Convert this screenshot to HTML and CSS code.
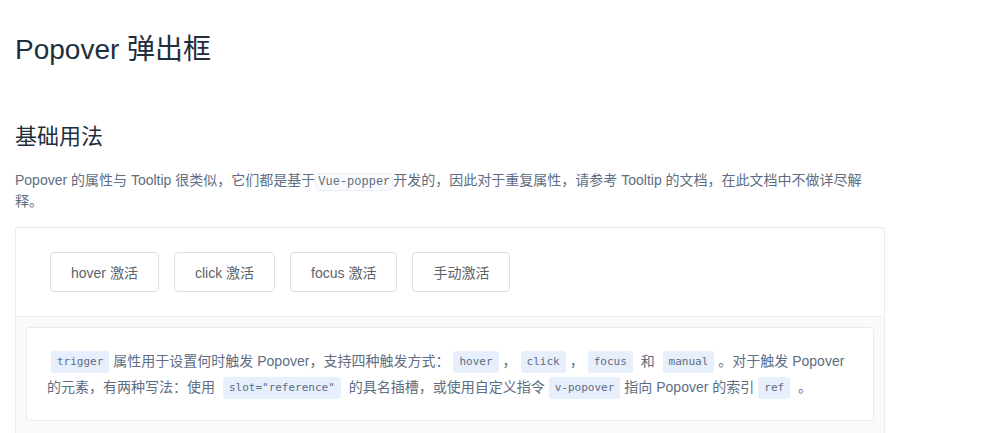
FILE: index.html
```html
<!DOCTYPE html>
<html lang="zh-CN">
<head>
    <meta charset="UTF-8">
    <meta name="viewport" content="width=device-width, initial-scale=1.0">
    <title>Popover 弹出框</title>
    <link rel="stylesheet" href="styles.css">
</head>
<body>
    <div class="page">
        <h2 class="page-title">Popover 弹出框</h2>

        <h3 class="section-title">基础用法</h3>
        <p class="section-desc">Popover 的属性与 Tooltip 很类似，它们都是基于<code>Vue-popper</code>开发的，因此对于重复属性，请参考 Tooltip 的文档，在此文档中不做详尽解释。</p>

        <div class="demo-block">
            <div class="demo-source">
                <button class="btn">hover 激活</button>
                <button class="btn">click 激活</button>
                <button class="btn">focus 激活</button>
                <button class="btn">手动激活</button>
            </div>
            <div class="demo-meta">
                <div class="description"><code>trigger</code>属性用于设置何时触发 Popover，支持四种触发方式：<code>hover</code>，<code>click</code>，<code>focus</code> 和 <code>manual</code>。对于触发 Popover 的元素，有两种写法：使用 <code>slot="reference"</code> 的具名插槽，或使用自定义指令<code>v-popover</code>指向 Popover 的索引<code>ref</code> 。</div>
            </div>
        </div>
    </div>
</body>
</html>
```

FILE: styles.css
```css
/* 基础 */
* {
    box-sizing: border-box;
}

body {
    margin: 0;
    background: #fff;
    font-family: 'Liberation Sans', Arial, 'Noto Sans CJK SC', sans-serif;
}

.page {
    width: 870px;
    margin-left: 15px;
}

/* 标题 */
.page-title {
    margin: 30px 0 0;
    font-size: 28px;
    line-height: 40px;
    font-weight: 400;
    color: #1f2f3d;
}

.section-title {
    margin: 52px 0 0;
    font-size: 22px;
    line-height: 30px;
    font-weight: 400;
    color: #1f2f3d;
}

.section-desc {
    margin: 18px 0 0;
    font-size: 14px;
    line-height: 21px;
    color: #5e6d82;
}

.section-desc code {
    font-family: 'Liberation Mono', 'Courier New', monospace;
    font-size: 12px;
    line-height: 1;
    color: #5e6d82;
    background-color: #f9fafc;
    border: 1px solid #eaeefb;
    border-radius: 4px;
    padding: 1px 2px;
}

/* 示例块 */
.demo-block {
    margin-top: 15px;
    border: 1px solid #ebebeb;
    border-bottom: none;
    border-radius: 3px 3px 0 0;
}

.demo-source {
    display: flex;
    gap: 15px;
    padding: 24px 24px 24px 34px;
}

.btn {
    height: 40px;
    padding: 0 20px;
    font-family: inherit;
    font-size: 14px;
    color: #606266;
    background: #fff;
    border: 1px solid #dcdfe6;
    border-radius: 4px;
    cursor: pointer;
}

.demo-meta {
    border-top: 1px solid #eaeefb;
    background-color: #fafafa;
    padding: 10px 10px 13px;
}

.description {
    background: #fff;
    border: 1px solid #ebebeb;
    border-radius: 3px;
    padding: 20px;
    font-size: 14px;
    line-height: 26px;
    color: #5e6d82;
}

.description code {
    display: inline-block;
    height: 22px;
    line-height: 22px;
    margin: 0 4px;
    padding: 0 6px;
    font-family: 'DejaVu Sans Mono', monospace;
    font-size: 11px;
    color: #5e6d82;
    background-color: #e6effb;
    border-radius: 3px;
    vertical-align: middle;
}
```
